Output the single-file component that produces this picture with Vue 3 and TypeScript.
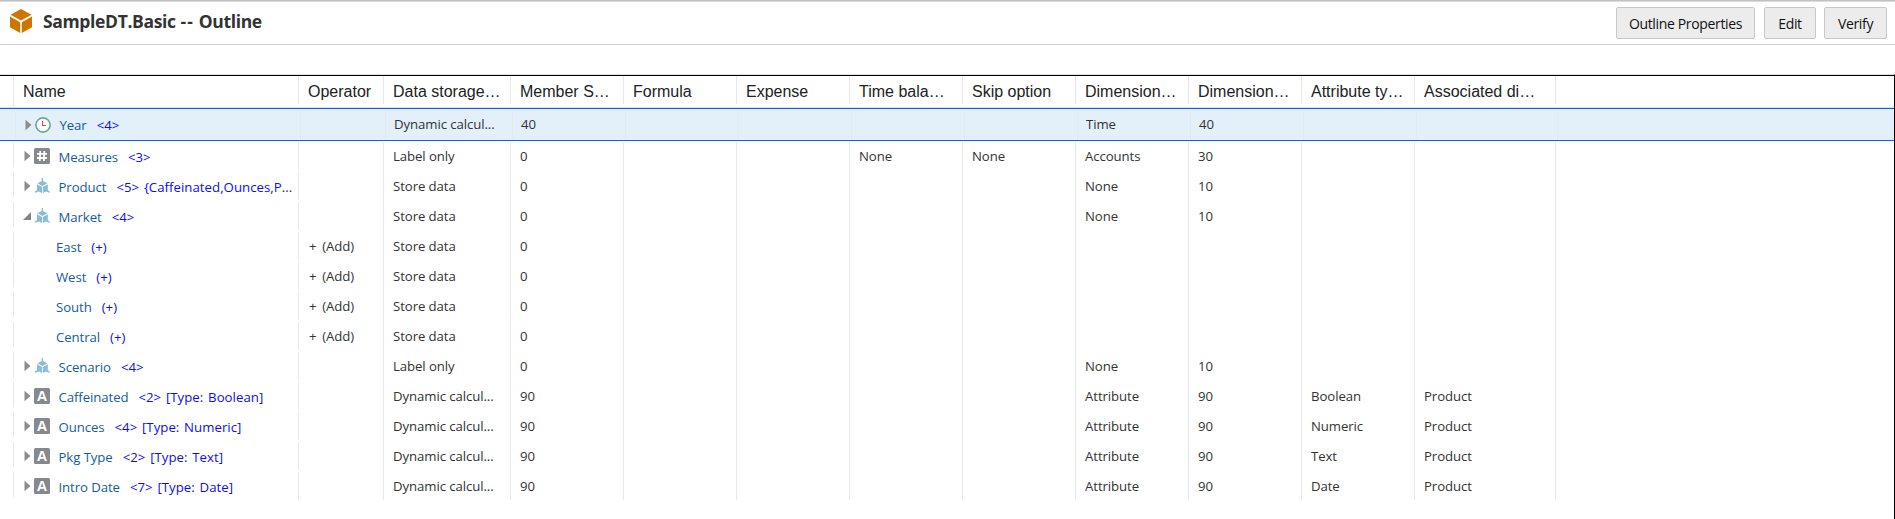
<script setup lang="ts">
type Kind = 'time' | 'accounts' | 'cube' | 'attribute' | ''

interface Row {
  name: string
  note: string
  rest?: string
  kind: Kind
  open?: boolean
  selected?: boolean
  cells: string[]
}

const headers: string[] = [
  'Name', 'Operator', 'Data storage…', 'Member S…', 'Formula', 'Expense', 'Time bala…',
  'Skip option', 'Dimension…', 'Dimension…', 'Attribute ty…', 'Associated di…',
]

const dim = (storage: string, solve: string, type = '', solve2 = '', attr = '', assoc = '', skip = ''): string[] =>
  ['', storage, solve, '', '', skip, skip, type, solve2, attr, assoc]

const child = (name: string): Row => ({
  name, note: '(+)', kind: '', cells: ['+ (Add)', 'Store data', '0', '', '', '', '', '', '', '', ''],
})

const attribute = (name: string, count: number, type: string): Row => ({
  name,
  note: `<${count}> [Type: ${type}]`,
  kind: 'attribute',
  cells: dim('Dynamic calcul...', '90', 'Attribute', '90', type, 'Product'),
})

const rows: Row[] = [
  { name: 'Year', note: '<4>', kind: 'time', selected: true, cells: dim('Dynamic calcul...', '40', 'Time', '40') },
  { name: 'Measures', note: '<3>', kind: 'accounts', cells: dim('Label only', '0', 'Accounts', '30', '', '', 'None') },
  { name: 'Product', note: '<5> {Caffeinated,Ounces,P', rest: '...', kind: 'cube', cells: dim('Store data', '0', 'None', '10') },
  { name: 'Market', note: '<4>', kind: 'cube', open: true, cells: dim('Store data', '0', 'None', '10') },
  child('East'),
  child('West'),
  child('South'),
  child('Central'),
  { name: 'Scenario', note: '<4>', kind: 'cube', cells: dim('Label only', '0', 'None', '10') },
  attribute('Caffeinated', 2, 'Boolean'),
  attribute('Ounces', 4, 'Numeric'),
  attribute('Pkg Type', 2, 'Text'),
  attribute('Intro Date', 7, 'Date'),
]
</script>

<template>
  <div class="page">
    <header class="bar">
      <svg class="logo" width="22" height="24" viewBox="0 0 22 24">
        <path fill="#d07400" d="M11 0 21.5 5.7 11 11.5.5 5.7Z M0 7.6 10.2 13.2V24L0 18.3Z M22 7.6 11.8 13.2V24L22 18.3Z" />
      </svg>
      <h1 class="title">SampleDT.Basic <span class="dashes">--</span> Outline</h1>
      <div class="actions">
        <button class="btn props">Outline Properties</button>
        <button class="btn edit">Edit</button>
        <button class="btn verify">Verify</button>
      </div>
    </header>
    <main class="outline">
      <div class="line head">
        <div v-for="(h, i) in headers" :key="i" class="cell">{{ h }}</div>
        <div class="cell"></div>
      </div>
      <div v-for="row in rows" :key="row.name" class="line row" :class="{ selected: row.selected }">
        <div class="cell name" :class="{ leaf: !row.kind }">
          <template v-if="row.kind">
            <svg class="arrow" width="9" height="12" viewBox="0 0 9 12">
              <path v-if="row.open" fill="#85817f" d="M8 2V10H0Z" />
              <path v-else fill="#8b8d91" d="M1.5 .8 7.5 6 1.5 11.2Z" />
            </svg>
            <svg class="icon" width="16" height="16" viewBox="0 0 16 16">
              <g v-if="row.kind === 'time'" fill="none">
                <circle cx="8" cy="8" r="7.1" fill="#fff" stroke="#69aaa2" stroke-width="1.7" />
                <path d="M7.5 4V8.5H11" stroke="#d0525c" stroke-width="1.1" />
              </g>
              <g v-else-if="row.kind === 'accounts'">
                <rect width="16" height="16" rx="1.5" fill="#85898d" />
                <path d="M6.2 3 5.8 13M10.3 3 9.9 13M3 5.9H13M3 10H13" fill="none" stroke="#fff" stroke-width="1.8" />
              </g>
              <g v-else-if="row.kind === 'cube'" fill="#8abbd8">
                <path d="M7.7 0H9V3L13.4 5.3 8.4 7.9 3.4 5.3 7.7 3Z" />
                <path d="M3 6.3 8 8.9V15L5 13.4 1 14.8.5 13.8 3 12.2Z M13.8 6.3 8.8 8.9V15L11.8 13.4 15.6 14.8 16 13.8 13.8 12.2Z" />
              </g>
              <g v-else>
                <rect width="16" height="16" rx="1.5" fill="#85898d" />
                <text x="8" y="13" class="letter">A</text>
              </g>
            </svg>
          </template>
          <span class="member">{{ row.name }}</span>
          <span class="note">{{ row.note }}<i v-if="row.rest" class="rest">{{ row.rest }}</i></span>
        </div>
        <div v-for="(c, i) in row.cells" :key="i" class="cell">{{ c }}</div>
        <div class="cell"></div>
      </div>
    </main>
  </div>
</template>

<style>
body {
  margin: 0;
  overflow: hidden;
  background: #fff;
}
</style>

<style scoped>
.page {
  box-sizing: border-box;
  height: 519px;
  display: flex;
  flex-direction: column;
  border-top: 1px solid #c1c1c1;
  font-family: 'Open Sans', 'Noto Sans', sans-serif;
  color: #333;
}
.bar {
  box-sizing: border-box;
  height: 44px;
  flex: none;
  display: flex;
  align-items: flex-start;
  padding: 0 8px 0 10px;
  border-top: 1px solid #dadada;
  border-bottom: 1px solid #d2d2d2;
}
.logo {
  margin-top: 7px;
}
.title {
  margin: 7px 0 0 11px;
  font-size: 17.5px;
  line-height: 24px;
  font-weight: 700;
  letter-spacing: -0.35px;
  word-spacing: 0.7px;
  white-space: nowrap;
}
.dashes {
  letter-spacing: 1px;
}
.actions {
  margin: 5px 0 0 auto;
  display: flex;
}
.btn {
  box-sizing: border-box;
  height: 32px;
  padding: 0;
  border: 1px solid #c8c8c8;
  border-radius: 2px;
  background: #ececec;
  color: #111;
  font: 14px 'Open Sans', 'Noto Sans', sans-serif;
  letter-spacing: -0.35px;
  white-space: nowrap;
}
.props {
  width: 139px;
  margin-right: 9px;
}
.edit {
  width: 52px;
  margin-right: 8px;
}
.verify {
  width: 63px;
}
.outline {
  margin-top: 29px;
  flex: 1;
  min-height: 0;
  border-top: 1px solid #dedede;
  border-right: 1px solid #000;
  box-shadow: inset 0 1px #000;
  padding-top: 1px;
}
.line {
  display: grid;
  grid-template-columns: 285px 85px 127px repeat(8, 113px) 141px 1fr;
  padding-left: 13px;
}
.cell {
  box-sizing: border-box;
  padding-left: 9px;
  border-left: 1px solid #e8e8e8;
  white-space: nowrap;
  overflow: hidden;
}
.head {
  height: 31px;
  border-bottom: 1px solid #dedede;
  font: 16px/31px 'Liberation Sans', Arial, sans-serif;
  color: #222;
}
.head .cell {
  height: 28px;
}
.head .cell:first-child {
  height: 30px;
}
.row {
  height: 30px;
  font-size: 13.2px;
  line-height: 29px;
  letter-spacing: -0.08px;
}
.row .cell:nth-child(1),
.row .cell:nth-child(2) {
  height: 28px;
}
.row .cell:nth-child(2) {
  padding-left: 10px;
  word-spacing: 2.5px;
}
.row .cell:first-child {
  height: 25px;
}
.row:last-child .cell {
  height: 28px;
}
.row:last-child .cell:first-child {
  height: 25px;
}
.row.selected {
  box-sizing: border-box;
  height: 33px;
  padding: 3px 0 4px 15px;
  border-top: 1px solid #0a62f5;
  border-bottom: 1px solid #0a62f5;
  background: #e3f0fa;
  line-height: 25px;
}
.row.selected + .row {
  margin-top: 1px;
}
.selected .cell {
  padding-left: 8px;
  border-color: #e2e9ef;
}
.name {
  display: flex;
  align-items: flex-start;
  color: #145c9e;
}
.name.leaf {
  padding-left: 42px;
}
.arrow {
  flex: none;
  margin: 8px 2px 0 0;
}
.icon {
  flex: none;
  margin: 6px 8.5px 0 0;
}
.selected .arrow {
  margin-top: 7px;
}
.selected .icon {
  margin-top: 5px;
}
.letter {
  font: 700 14.5px 'Liberation Sans', Arial, sans-serif;
  letter-spacing: 0;
  fill: #fff;
  text-anchor: middle;
}
.member,
.note {
  padding-top: 1px;
}
.member {
  margin-right: 10px;
}
.note {
  color: #0c0cf5;
  letter-spacing: 0.04px;
  word-spacing: 1.3px;
}
.rest {
  font-style: normal;
  color: #333;
}
</style>
